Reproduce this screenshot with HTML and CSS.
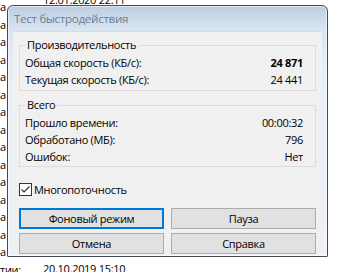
FILE: index.html
```html
<!DOCTYPE html>
<html lang="ru">
<head>
<meta charset="utf-8">
<title>Тест быстродействия</title>
<link rel="stylesheet" href="styles.css">
</head>
<body>
<div class="desktop">
  <div class="col-labels">
    <div class="lbl">а</div><div class="lbl">а</div><div class="lbl">а</div><div class="lbl">а</div><div class="lbl">а</div>
    <div class="lbl">а</div><div class="lbl">а</div><div class="lbl">а</div><div class="lbl">а</div><div class="lbl">а</div>
    <div class="lbl">а</div><div class="lbl">а</div><div class="lbl">а</div><div class="lbl">а</div><div class="lbl">а</div>
    <div class="lbl">тии:</div>
  </div>
  <div class="col-dates">
    <div class="date">12.01.2020 22:11</div>
    <div class="date">20.10.2019 15:10</div>
  </div>
</div>

<div class="window">
  <div class="titlebar">Тест быстродействия</div>
  <div class="frame">
    <div class="client">
      <fieldset class="group g1">
        <legend>Производительность</legend>
        <div class="row"><span>Общая скорость (КБ/с):</span><span class="val bold">24 871</span></div>
        <div class="row"><span>Текущая скорость (КБ/с):</span><span class="val">24 441</span></div>
      </fieldset>
      <fieldset class="group g2">
        <legend>Всего</legend>
        <div class="row r2"><span>Прошло времени:</span><span class="val">00:00:32</span></div>
        <div class="row r2"><span>Обработано (МБ):</span><span class="val">796</span></div>
        <div class="row r2"><span>Ошибок:</span><span class="val">Нет</span></div>
      </fieldset>
      <label class="check">
        <span class="box"><svg width="11" height="11" viewBox="0 0 11 11"><path d="M1.5 5.5 L4 8 L9.5 2.5" fill="none" stroke="#333" stroke-width="1.2"/></svg></span>
        <span>Многопоточность</span>
      </label>
      <div class="buttons">
        <button class="btn default">Фоновый режим</button>
        <button class="btn">Пауза</button>
        <button class="btn">Отмена</button>
        <button class="btn">Справка</button>
      </div>
    </div>
  </div>
</div>
</body>
</html>
```
FILE: styles.css
```css
* { box-sizing: border-box; }
html, body {
  margin: 0;
  padding: 0;
  background: #fff;
  font-family: "Open Sans", "Noto Sans", sans-serif;
  font-size: 11px;
  letter-spacing: -0.3px;
  color: #000;
  overflow: hidden;
}
.desktop {
  display: flex;
  height: 272px;
  overflow: hidden;
}
.col-labels {
  width: 43px;
  margin-top: -2px;
  display: flex;
  flex-direction: column;
}
.lbl {
  height: 17.5px;
  line-height: 17.5px;
}
.col-dates {
  display: flex;
  flex-direction: column;
  justify-content: space-between;
  margin-top: -8px;
  height: 285px;
}
.date { line-height: 16px; }

.window {
  position: absolute;
  left: 7px;
  top: 5px;
  width: 321px;
  height: 252px;
  border: 1px solid #434b55;
  border-radius: 6px 6px 1px 1px;
  background: linear-gradient(#bccde2 0px, #d9e5f2 24px, #e6eef7 60px, #edf2f8 100%);
  box-shadow: inset 0 0 0 1px rgba(255,255,255,0.55);
  display: flex;
  flex-direction: column;
}
.titlebar {
  height: 25px;
  line-height: 25px;
  padding-left: 6px;
  color: #6f7c8b;
  font-size: 11.6px;
}
.frame {
  flex: 1;
  padding: 0 5px 3px 5px;
  display: flex;
}
.client {
  flex: 1;
  background: #f0f0f0;
  border: 1px solid #d4dde8;
  border-width: 1px 0 0 0;
  padding: 0 6px 0 6px;
  display: flex;
  flex-direction: column;
}
.group {
  margin: 0;
  border: 1px solid #dcdcdc;
  padding: 2px 12px 2px 5px;
  min-width: 0;
}
.g1 { margin-top: 5px; }
.g2 { margin-top: 6px; padding-bottom: 1px; }
.group legend {
  padding: 0 2px;
  line-height: 16px;
}
.row {
  display: flex;
  justify-content: space-between;
  height: 16.5px;
  line-height: 16.5px;
}
.row.r2 {
  height: 16.75px;
  line-height: 16.75px;
}
.bold { font-weight: 700; }

.check {
  display: flex;
  align-items: center;
  gap: 2px;
  margin-top: 14px;
  height: 16px;
}
.box {
  width: 13px;
  height: 13px;
  border: 1px solid #333;
  background: #fff;
  display: flex;
  align-items: center;
  justify-content: center;
}
.box svg { display: block; }

.buttons {
  display: grid;
  grid-template-columns: 1fr 1fr;
  column-gap: 7px;
  row-gap: 4px;
  margin-top: 11px;
}
.btn {
  height: 21px;
  margin: 0;
  padding: 0;
  font-family: inherit;
  font-size: inherit;
  letter-spacing: inherit;
  color: #000;
  background: #e1e1e1;
  border: 1px solid #adadad;
  border-radius: 0;
}
.btn.default {
  border: 2px solid #0078d7;
}
```
